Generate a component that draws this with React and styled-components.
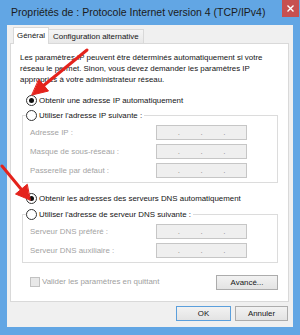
import styled, { createGlobalStyle } from "styled-components";

const GlobalStyle = createGlobalStyle`
  html, body {
    margin: 0;
    padding: 0;
  }
  body {
    width: 300px;
    height: 335px;
    overflow: hidden;
    font-family: "Liberation Sans", Arial, sans-serif;
  }
`;

const ipRows = ["Adresse IP :", "Masque de sous-réseau :", "Passerelle par défaut :"];
const dnsRows = ["Serveur DNS préféré :", "Serveur DNS auxiliaire :"];

function IpField() {
  return (
    <Field>
      <Dot>.</Dot>
      <Dot>.</Dot>
      <Dot>.</Dot>
    </Field>
  );
}

function Radio({ checked, children, ...rest }) {
  return (
    <RadioRow {...rest}>
      <RadioCircle $checked={checked} />
      <span>{children}</span>
    </RadioRow>
  );
}

export default function App() {
  return (
    <>
      <GlobalStyle />
      <Window>
        <TitleBar>
          <Title>Propriétés de : Protocole Internet version 4 (TCP/IPv4)</Title>
          <CloseButton>
            <svg width="7" height="7" viewBox="0 0 7 7">
              <path d="M0.5 0.5 L6.5 6.5 M6.5 0.5 L0.5 6.5" stroke="#fff" strokeWidth="1.4" />
            </svg>
          </CloseButton>
        </TitleBar>

        <Client>
          <Tabs>
            <Tab $active>Général</Tab>
            <Tab>Configuration alternative</Tab>
          </Tabs>

          <Panel>
            <Intro>
              Les paramètres IP peuvent être déterminés automatiquement si votre
              <br />
              réseau le permet. Sinon, vous devez demander les paramètres IP
              <br />
              appropriés à votre administrateur réseau.
            </Intro>

            <Radio checked $top={10}>
              Obtenir une adresse IP automatiquement
            </Radio>

            <Group $top={4}>
              <Legend>
                <Radio>Utiliser l'adresse IP suivante :</Radio>
              </Legend>
              <FieldGrid>
                {ipRows.map((label) => (
                  <Pair key={label}>
                    <FieldLabel>{label}</FieldLabel>
                    <IpField />
                  </Pair>
                ))}
              </FieldGrid>
            </Group>

            <Radio checked $top={10}>
              Obtenir les adresses des serveurs DNS automatiquement
            </Radio>

            <Group $top={5}>
              <Legend>
                <Radio>Utiliser l'adresse de serveur DNS suivante :</Radio>
              </Legend>
              <FieldGrid>
                {dnsRows.map((label) => (
                  <Pair key={label}>
                    <FieldLabel>{label}</FieldLabel>
                    <IpField />
                  </Pair>
                ))}
              </FieldGrid>
            </Group>

            <CheckRow>
              <CheckBox />
              <CheckLabel>Valider les paramètres en quittant</CheckLabel>
              <Button $width={62}>Avancé...</Button>
            </CheckRow>
          </Panel>

          <Footer>
            <Button $width={55} $primary>
              OK
            </Button>
            <Button $width={53}>Annuler</Button>
          </Footer>
        </Client>

        <Arrows width="300" height="335" viewBox="0 0 300 335">
          <g stroke="#e4231c" strokeWidth="3" strokeLinecap="round" fill="#e4231c">
            <line x1="87" y1="50" x2="43" y2="86" />
            <polygon points="32,95 48.5,91 39,79.5" strokeWidth="1" strokeLinejoin="round" />
            <line x1="2" y1="166" x2="21" y2="189" />
            <polygon points="30,200 15.5,194 27,184.5" strokeWidth="1" strokeLinejoin="round" />
          </g>
        </Arrows>
      </Window>
    </>
  );
}

const Pair = styled.div`
  display: contents;
`;

const Window = styled.div`
  position: relative;
  width: 300px;
  height: 335px;
  box-sizing: border-box;
  background: #62a6e4;
  display: flex;
  flex-direction: column;
`;

const TitleBar = styled.div`
  height: 25px;
  display: flex;
  align-items: flex-start;
  flex-shrink: 0;
`;

const Title = styled.div`
  margin: 4px 0 0 11px;
  font-size: 10.5px;
  line-height: 16px;
  color: #1b1b1b;
  white-space: nowrap;
`;

const CloseButton = styled.div`
  margin-left: auto;
  margin-right: 1px;
  width: 17px;
  height: 17px;
  background: #c75050;
  display: flex;
  align-items: center;
  justify-content: center;
`;

const Client = styled.div`
  flex: 1;
  margin: 0 7px 8px;
  background: #f0f0f0;
  display: flex;
  flex-direction: column;
  padding: 2px 4px 0 3px;
  font-size: 7.9px;
  color: #141414;
`;

const Tabs = styled.div`
  display: flex;
  align-items: flex-end;
  padding-left: 3px;
  margin-bottom: -1px;
  position: relative;
  z-index: 1;
`;

const Tab = styled.div`
  box-sizing: border-box;
  height: ${({ $active }) => ($active ? "17px" : "14px")};
  margin-bottom: ${({ $active }) => ($active ? "0" : "1px")};
  padding: ${({ $active }) => ($active ? "0 3px 2px" : "0 4px")};
  border: 1px solid #d9d9d9;
  border-bottom: none;
  background: ${({ $active }) =>
    $active ? "#fff" : "linear-gradient(#f5f5f5, #e8e8e8)"};
  display: flex;
  align-items: center;
  white-space: nowrap;
  & + & {
    margin-left: -1px;
  }
`;

const Panel = styled.div`
  background: #fff;
  border: 1px solid #d9d9d9;
  padding: 8px 8px 11px 9px;
  display: flex;
  flex-direction: column;
`;

const Intro = styled.p`
  margin: 0;
  line-height: 11px;
  white-space: nowrap;
`;

const RadioRow = styled.div`
  display: flex;
  align-items: center;
  gap: 2px;
  height: 11px;
  margin-top: ${({ $top }) => ($top ? `${$top}px` : "0")};
  margin-left: ${({ $top }) => ($top ? "6px" : "0")};
  white-space: nowrap;
  color: #141414;
`;

const RadioCircle = styled.span`
  box-sizing: border-box;
  width: 11px;
  height: 11px;
  border-radius: 50%;
  border: 1px solid #333;
  background: #fff;
  display: flex;
  align-items: center;
  justify-content: center;
  flex-shrink: 0;
  &::after {
    content: "";
    width: 5px;
    height: 5px;
    border-radius: 50%;
    background: ${({ $checked }) => ($checked ? "#111" : "transparent")};
  }
`;

const Group = styled.fieldset`
  margin: ${({ $top }) => `${$top}px`} 2px 0;
  padding: 0 0 4px 3px;
  border: 1px solid #dcdcdc;
  min-width: 0;
`;

const Legend = styled.legend`
  padding: 0 2px 0 0;
  font-size: 7.9px;
`;

const FieldGrid = styled.div`
  display: grid;
  grid-template-columns: 126px 91px;
  row-gap: 4px;
  padding: 4px 0 0 4px;
`;

const FieldLabel = styled.span`
  align-self: center;
  color: #a3a3a3;
  white-space: nowrap;
`;

const Field = styled.div`
  box-sizing: border-box;
  height: 15px;
  border: 1px solid #c6c6c6;
  background: #efefef;
  display: flex;
  justify-content: space-evenly;
  align-items: center;
`;

const Dot = styled.span`
  font-size: 8px;
  line-height: 8px;
  color: #8a8a8a;
  width: 2px;
  text-align: center;
`;

const CheckRow = styled.div`
  display: flex;
  align-items: center;
  margin-top: 12px;
  padding: 0 2px 0 10px;
`;

const CheckBox = styled.span`
  box-sizing: border-box;
  width: 10px;
  height: 10px;
  border: 1px solid #c2c2c2;
  background: #e8e8e8;
  margin-top: -2px;
`;

const CheckLabel = styled.span`
  margin: -2px 0 0 2px;
  color: #a0a0a0;
  white-space: nowrap;
`;

const Button = styled.div`
  box-sizing: border-box;
  width: ${({ $width }) => `${$width}px`};
  height: 15px;
  margin-left: auto;
  border: 1px solid ${({ $primary }) => ($primary ? "#5b9fdc" : "#acacac")};
  background: linear-gradient(#f2f2f2, #e3e3e3);
  display: flex;
  align-items: center;
  justify-content: center;
  color: #151515;
  white-space: nowrap;
`;

const Footer = styled.div`
  display: flex;
  justify-content: flex-end;
  gap: 4px;
  padding: 4px 1px 0 0;
  & > * {
    margin-left: 0;
  }
`;

const Arrows = styled.svg`
  position: absolute;
  left: 0;
  top: 0;
  pointer-events: none;
`;
